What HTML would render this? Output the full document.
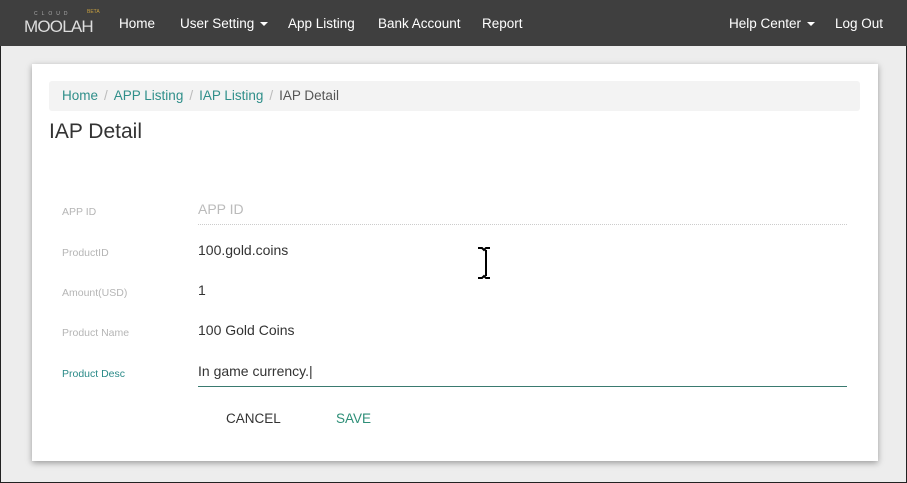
<!DOCTYPE html>
<html><head><style>
*{margin:0;padding:0;box-sizing:border-box}
body{width:907px;height:483px;overflow:hidden;font-family:"Liberation Sans",sans-serif;background:#ededed;position:relative;border:1px solid #222}
.nav{position:absolute;left:-1px;top:-1px;width:907px;height:46px;background:#3f3f3f;color:#fff;font-size:13.5px}
.nav span{position:absolute;top:16px}
.card{position:absolute;left:31px;top:63px;width:846px;height:397px;background:#fff;box-shadow:0 2px 6px rgba(0,0,0,.35)}
.bc{position:absolute;left:17px;top:17px;width:811px;height:30px;background:#f3f3f3;border-radius:3px;font-size:13.5px;color:#2f8f8a;padding:7px 13px}
.bc i{font-style:normal;color:#bbb;padding:0 6px}
.lab{position:absolute;left:30px;font-size:10.5px;color:#b5b5b5}
.val{position:absolute;left:166px;font-size:14px;color:#333}
.caret{display:inline-block;border-left:4px solid transparent;border-right:4px solid transparent;border-top:4px solid #fff;vertical-align:middle;margin-left:2px}
</style></head><body>
<div class="nav">
<div style="position:absolute;left:24px;top:9px;width:70px;height:30px">
<div style="font-size:5px;letter-spacing:4px;color:#aaa;position:absolute;left:10px;top:2px">CLOUD</div>
<div style="font-size:5px;color:#c8a040;position:absolute;left:63px;top:0">BETA</div>
<div style="font-size:17px;color:#ddd;position:absolute;left:0;top:8px;letter-spacing:-0.8px">MOOLAH</div></div>
<span style="left:119px">Home</span>
<span style="left:180px">User Setting <b class="caret"></b></span>
<span style="left:288px">App Listing</span>
<span style="left:378px">Bank Account</span>
<span style="left:482px">Report</span>
<span style="left:729px">Help Center <b class="caret"></b></span>
<span style="left:835px">Log Out</span>
</div>
<div class="card">
<div class="bc">Home<i>/</i>APP Listing<i>/</i>IAP Listing<i>/</i><span style="color:#555">IAP Detail</span></div>
<div style="position:absolute;left:17px;top:56px;font-size:21px;color:#333">IAP Detail</div>
<div class="lab" style="top:142px">APP ID</div><div class="val" style="top:137px;color:#bbb">APP ID</div>
<div style="position:absolute;left:166px;top:160px;width:649px;border-top:1px dotted #ccc"></div>
<div class="lab" style="top:183px">ProductID</div><div class="val" style="top:178px">100.gold.coins</div>
<div class="lab" style="top:223px">Amount(USD)</div><div class="val" style="top:218px">1</div>
<div class="lab" style="top:263px">Product Name</div><div class="val" style="top:258px">100 Gold Coins</div>
<div class="lab" style="top:304px;color:#2a8a88">Product Desc</div><div class="val" style="top:299px">In game currency.|</div>
<div style="position:absolute;left:166px;top:322px;width:649px;border-top:1px solid #3a7a70"></div>
<div style="position:absolute;left:194px;top:347px;font-size:13.5px;color:#333">CANCEL</div>
<div style="position:absolute;left:304px;top:347px;font-size:13.5px;color:#2e8f78">SAVE</div>
<svg style="position:absolute;left:444px;top:182px" width="20" height="34"><path d="M2 2h4l2 2 2-2h4M10 4v26M2 32h4l2-2 2 2h4" stroke="#000" stroke-width="2" fill="none"/></svg>
</div>
</body></html>
